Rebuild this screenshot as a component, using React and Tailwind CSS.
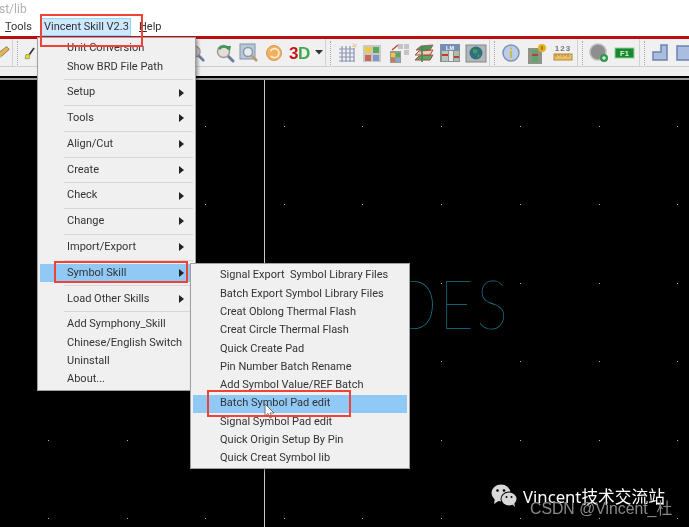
import React from 'react';

const mainMenu = [
  { label: 'Unit Conversion' },
  { label: 'Show BRD File Path' },
  { sep: true },
  { label: 'Setup', arrow: true },
  { sep: true },
  { label: 'Tools', arrow: true },
  { sep: true },
  { label: 'Align/Cut', arrow: true },
  { sep: true },
  { label: 'Create', arrow: true },
  { sep: true },
  { label: 'Check', arrow: true },
  { sep: true },
  { label: 'Change', arrow: true },
  { sep: true },
  { label: 'Import/Export', arrow: true },
  { sep: true },
  { label: 'Symbol Skill', arrow: true, active: true },
  { sep: true },
  { label: 'Load Other Skills', arrow: true },
  { sep: true },
  { label: 'Add Symphony_Skill' },
  { label: 'Chinese/English Switch' },
  { label: 'Uninstall' },
  { label: 'About...' },
];

const subMenu = [
  'Signal Export\u00a0 Symbol Library Files',
  'Batch Export Symbol Library Files',
  'Creat Oblong Thermal Flash',
  'Creat Circle Thermal Flash',
  'Quick Create Pad',
  'Pin Number Batch Rename',
  'Add Symbol Value/REF Batch',
  'Batch Symbol Pad edit',
  'Signal Symbol Pad edit',
  'Quick Origin Setup By Pin',
  'Quick Creat Symbol lib',
];

const Svg = ({ children, w = 22 }) => (
  <svg width={w} height="22" viewBox={`0 0 ${w} 22`} className="block">{children}</svg>
);

const Lens = ({ color = '#c9d6e2' }) => (
  <>
    <line x1="13" y1="13" x2="19" y2="19" stroke="#6b7f9e" strokeWidth="3" strokeLinecap="round" />
    <circle cx="9.5" cy="9.5" r="6" fill={color} stroke="#9a9a9a" strokeWidth="1.5" />
  </>
);

const icons = {
  pencil: (
    <Svg>
      <path d="M4 17 L7 11 L16 4 L19 7 L10 15 Z" fill="#e3b35a" stroke="#8a7448" strokeWidth="1" />
      <path d="M4 17 L7 11 L10 15 Z" fill="#d8d8d8" />
    </Svg>
  ),
  brush: (
    <Svg>
      <path d="M10 13 L16 5" stroke="#333" strokeWidth="2" />
      <path d="M6 13 L11 13 L10 18 L5 18 Z" fill="#e8d94a" stroke="#9a9340" strokeWidth="1" />
    </Svg>
  ),
  zoomIn: <Svg><Lens color="#d3c9c9" /></Svg>,
  zoomBack: (
    <Svg>
      <Lens color="#e8dcd6" />
      <path d="M5 7 Q10 2 15 7" fill="none" stroke="#3c9a55" strokeWidth="2.5" />
      <path d="M12 4 L17 4 L16 9 Z" fill="#3c9a55" />
    </Svg>
  ),
  zoomFit: (
    <Svg>
      <rect x="2" y="2" width="15" height="15" fill="#b9c8d8" stroke="#8294a8" />
      <circle cx="10" cy="10" r="4.5" fill="#e5edf3" stroke="#8a96a3" strokeWidth="1.5" />
      <line x1="14" y1="14" x2="19" y2="19" stroke="#b79a6a" strokeWidth="2.5" />
    </Svg>
  ),
  refresh: (
    <Svg>
      <circle cx="11" cy="11" r="7.5" fill="#f0b060" stroke="#d99a50" />
      <path d="M7.5 9 A4.5 4.5 0 1 1 8 14" fill="none" stroke="#fff0d8" strokeWidth="1.6" />
    </Svg>
  ),
  threeD: (
    <Svg>
      <text x="0" y="17" fontSize="17" fontWeight="700" fill="#c8141c" fontFamily="'Liberation Sans', sans-serif">3</text>
      <text x="9" y="17" fontSize="17" fontWeight="700" fill="#44a84f" fontFamily="'Liberation Sans', sans-serif">D</text>
    </Svg>
  ),
  drop: (
    <svg width="8" height="5" viewBox="0 0 8 5" className="block"><path d="M0 0 H8 L4 4.5 Z" fill="#333" /></svg>
  ),
  grid: (
    <Svg>
      <path d="M3 7 H18 M3 11 H18 M3 15 H18 M3 19 H18 M6 4 V20 M10 4 V20 M14 4 V20 M18 6 V20" stroke="#8d93b5" strokeWidth="1.2" />
      <path d="M17 1 L19 4 L21 2 M16 4 L20 5" stroke="#e8c080" strokeWidth="1" fill="none" />
    </Svg>
  ),
  colors: (
    <Svg>
      <rect x="2" y="3" width="18" height="17" fill="#c8c8c8" />
      <rect x="4" y="5" width="6" height="6" fill="#eec93c" />
      <rect x="12" y="5" width="6" height="6" fill="#58a85c" />
      <rect x="4" y="13" width="6" height="6" fill="#c56a5a" />
      <rect x="12" y="13" width="6" height="6" fill="#7f96c8" />
    </Svg>
  ),
  layers: (
    <Svg>
      <rect x="11" y="2" width="5" height="5" fill="#c4c4c4" />
      <rect x="17" y="2" width="5" height="5" fill="#c4c4c4" />
      <rect x="17" y="8" width="5" height="5" fill="#c4c4c4" />
      <rect x="3" y="9" width="11" height="12" fill="#9a9a8e" />
      <rect x="4" y="11" width="4" height="4" fill="#eec93c" />
      <rect x="9" y="11" width="4" height="4" fill="#58a85c" />
      <rect x="4" y="16" width="4" height="4" fill="#c87a6a" />
      <rect x="9" y="16" width="4" height="4" fill="#8fa6d0" />
      <path d="M5 8 L11 3" stroke="#c23a3a" strokeWidth="1.2" />
    </Svg>
  ),
  stack: (
    <Svg>
      <path d="M3 8 L8 4 L20 3 L17 8 Z" fill="#3f9a55" stroke="#a85a5a" />
      <path d="M2 13 L6 9 L20 8 L17 13 Z" fill="#e4d0b0" stroke="#a84a4a" />
      <path d="M2 18 L6 14 L20 13 L17 18 Z" fill="#5aa865" stroke="#a84a4a" />
      <path d="M9 4 V20" stroke="#3f8a4f" strokeWidth="1.6" />
    </Svg>
  ),
  lm: (
    <Svg>
      <rect x="1" y="2" width="20" height="18" fill="#8a8f94" />
      <rect x="2" y="3" width="18" height="5" fill="#6f8fc0" />
      <text x="11" y="7.6" textAnchor="middle" fontSize="5.5" fontWeight="700" fill="#fff" fontFamily="'Liberation Sans', sans-serif">LM</text>
      <rect x="3" y="9" width="6" height="10" fill="#b8c8b8" />
      <rect x="10" y="9" width="4" height="10" fill="#e8e8e8" />
      <rect x="15" y="9" width="5" height="10" fill="#a8c0a8" />
      <rect x="3" y="12" width="6" height="2" fill="#c23a3a" />
      <rect x="15" y="14" width="5" height="2" fill="#c23a3a" />
    </Svg>
  ),
  globe: (
    <Svg>
      <rect x="1" y="3" width="20" height="17" fill="#b2b6b8" stroke="#85888a" />
      <circle cx="11" cy="11" r="6.5" fill="#2f6f7f" />
      <path d="M8 7 L13 8 L11 12 L8 11 Z M13 12 L15 14 L12 16 Z" fill="#4a9a5a" />
    </Svg>
  ),
  info: (
    <Svg>
      <circle cx="11" cy="11" r="8" fill="#b9cce8" stroke="#7f92b4" strokeWidth="1.5" />
      <rect x="10" y="9" width="2" height="7" fill="#d0b840" />
      <rect x="10" y="5.5" width="2" height="2" fill="#d0b840" />
    </Svg>
  ),
  status: (
    <Svg>
      <rect x="2" y="6" width="14" height="16" fill="#8f9488" />
      <rect x="6" y="8" width="6" height="12" fill="#5fa468" />
      <rect x="6" y="12" width="6" height="2" fill="#c23a3a" />
      <circle cx="16" cy="6" r="4" fill="#e8b020" />
      <rect x="15.5" y="4" width="1" height="4" fill="#6a5010" />
    </Svg>
  ),
  ruler: (
    <Svg w={24}>
      <text x="12" y="9" textAnchor="middle" fontSize="8" fontWeight="700" letterSpacing="1" fill="#777" fontFamily="'Liberation Sans', sans-serif">123</text>
      <rect x="3" y="12" width="18" height="6" fill="#eebf60" stroke="#b08a40" />
      <path d="M5 12 V15 M8 12 V14 M11 12 V15 M14 12 V14 M17 12 V15" stroke="#a07830" strokeWidth="0.8" />
    </Svg>
  ),
  knob: (
    <Svg>
      <circle cx="10" cy="10" r="8" fill="#8e8e8e" stroke="#bdbdbd" strokeWidth="1.5" />
      <circle cx="16" cy="16" r="4" fill="#2f9a4f" />
      <path d="M14 16 H18 M16 14 V18" stroke="#fff" strokeWidth="1" />
    </Svg>
  ),
  f1: (
    <Svg w={24}>
      <rect x="2" y="6" width="19" height="10" fill="#178a2e" stroke="#9ccaa4" />
      <text x="11.5" y="13.8" textAnchor="middle" fontSize="7.5" fontWeight="700" fill="#d8f0d8" fontFamily="'Liberation Sans', sans-serif">F1</text>
    </Svg>
  ),
  step: (
    <Svg>
      <path d="M12 3 H18 V18 H4 V10 H12 Z" fill="#a8bde0" stroke="#6d84ad" strokeWidth="1.5" />
    </Svg>
  ),
  box: (
    <Svg>
      <rect x="3" y="4" width="19" height="14" fill="#a8bde0" stroke="#6d84ad" strokeWidth="1.5" />
    </Svg>
  ),
};

// width of each toolbar cell, the row has to land on the icon columns of the picture
const toolbar = [
  { w: 'w-[20px] -ml-2', icon: 'pencil' },
  { sep: true },
  { handle: true },
  { w: 'w-[18px]', icon: 'brush' },
  { w: 'w-[147px]' },
  { w: 'w-[20px]', icon: 'zoomIn' },
  { w: 'w-[7px]' },
  { w: 'w-[24px]', icon: 'zoomBack' },
  { w: 'w-[24px]', icon: 'zoomFit' },
  { w: 'w-[26px]', icon: 'refresh' },
  { w: 'w-[26px]', icon: 'threeD' },
  { w: 'w-[12px]', icon: 'drop' },
  { sep: true },
  { handle: true },
  { w: 'w-[25px]', icon: 'grid' },
  { w: 'w-[26px]', icon: 'colors' },
  { w: 'w-[26px]', icon: 'layers' },
  { w: 'w-[26px]', icon: 'stack' },
  { w: 'w-[26px]', icon: 'lm' },
  { w: 'w-[26px]', icon: 'globe' },
  { sep: true },
  { handle: true },
  { w: 'w-[26px]', icon: 'info' },
  { w: 'w-[25px]', icon: 'status' },
  { w: 'w-[28px]', icon: 'ruler' },
  { sep: true },
  { handle: true },
  { w: 'w-[25px]', icon: 'knob' },
  { w: 'w-[28px]', icon: 'f1' },
  { sep: true },
  { handle: true },
  { w: 'w-[24px]', icon: 'step' },
  { w: 'w-[25px]', icon: 'box' },
];

const dotXs = [48, 127, 205, 284, 362, 441, 520, 599, 677];
const dotYs = [126, 204, 283, 361, 440, 518];

const Arrow = () => (
  <svg width="5" height="8" viewBox="0 0 5 8" className="block"><path d="M0 0 L5 4 L0 8 Z" fill="#222" /></svg>
);

const WeChat = () => (
  <svg width="27" height="24" viewBox="0 0 27 24" className="block">
    <ellipse cx="10" cy="9" rx="9.5" ry="8.5" fill="#d8d8d8" />
    <path d="M4 14 L3 20 L9 16 Z" fill="#d8d8d8" />
    <ellipse cx="18" cy="15" rx="8.5" ry="7.5" fill="#000" />
    <ellipse cx="18" cy="15" rx="7.5" ry="6.5" fill="#d8d8d8" />
    <path d="M21 20 L24 23 L23 18 Z" fill="#d8d8d8" />
    <circle cx="6.5" cy="6.5" r="1.3" fill="#000" />
    <circle cx="13" cy="6.5" r="1.3" fill="#000" />
    <circle cx="15.5" cy="13" r="1" fill="#000" />
    <circle cx="20.5" cy="13" r="1" fill="#000" />
  </svg>
);

export default function App() {
  return (
    <div className="relative w-[689px] h-[527px] overflow-hidden flex flex-col bg-black font-['Roboto',sans-serif] text-[11px] text-[#333] [filter:blur(0.45px)]">
      {/* title */}
      <div className="h-[18px] bg-white text-[#b0b0b0] text-[12px] leading-[18px] -ml-[1px]">st/lib</div>

      {/* menu bar */}
      <div className="h-[18px] bg-white flex items-center text-[#333]">
        <span className="ml-[5px] w-[35px]"><span className="underline">T</span>ools</span>
        <span className="w-[91px] h-full bg-[#cde8ff] border border-[#99d1ff] pl-[3px] leading-[16px] whitespace-nowrap">Vincent Skill V2.3</span>
        <span className="ml-[8px]"><span className="underline">H</span>elp</span>
      </div>
      <div className="h-[3px] bg-[#b90f14]" />

      {/* toolbar */}
      <div className="h-[28px] flex items-center bg-[#f0f0f0] border-b border-[#cfcfcf] overflow-hidden shrink-0">
        {toolbar.map((it, i) => {
          if (it.sep) return <div key={i} className="w-px h-full bg-[#d2d2d2] shrink-0" />;
          if (it.handle) {
            return (
              <div key={i} className="w-[8px] h-[24px] shrink-0 flex justify-center">
                <div className="w-px h-full border-l border-dotted border-[#a8a8a8]" />
              </div>
            );
          }
          return (
            <div key={i} className={`${it.w} h-full shrink-0 flex items-center justify-center`}>
              {it.icon && icons[it.icon]}
            </div>
          );
        })}
      </div>
      <div className="h-[9px] bg-[#f0f0f0] shrink-0" />
      <div className="h-[2px] bg-black shrink-0" />
      <div className="h-[2px] bg-[#9a9a9a] shrink-0" />

      {/* canvas */}
      <div className="relative flex-1">
        <svg width="689" height="447" viewBox="0 80 689 447" className="absolute inset-0">
          <line x1="264.5" y1="80" x2="264.5" y2="527" stroke="#c8c8c8" />
          {dotYs.map((y) => dotXs.map((x) => (
            <rect key={`${x}-${y}`} x={x} y={y} width="1" height="1" fill="#b0b0b0" />
          )))}
        </svg>
        <div className="absolute left-[392px] top-[189px] origin-left scale-x-[0.87] font-['Lato',sans-serif] font-thin text-[#1d7a8e] text-[68px] leading-[68px] tracking-[3px]">DES</div>
        <div className="absolute left-[491px] top-[404px]"><WeChat /></div>
        <div className="absolute left-[523px] top-[405px] text-white text-[16.7px] leading-[24px] whitespace-nowrap font-['Noto_Sans','Noto_Sans_CJK_SC',sans-serif]">Vincent技术交流站</div>
        <div className="absolute left-[530px] top-[418px] text-[#8a8a8a] text-[15.8px] leading-[22px] whitespace-nowrap font-['Liberation_Sans','Noto_Sans_CJK_SC',sans-serif]">CSDN @Vincent_杜</div>
      </div>

      {/* main menu */}
      <div className="absolute left-[37px] top-[37px] w-[159px] h-[354px] bg-[#f0f0f0] border border-[#a0a0a0] pt-[1.5px] pl-[2px] pr-[2px] shadow-[2px_2px_3px_rgba(0,0,0,0.35)]">
        {mainMenu.map((it, i) =>
          it.sep ? (
            <div key={i} className="h-[7.6px] flex items-center pl-[24px]">
              <div className="h-px w-full bg-[#d7d7d7]" />
            </div>
          ) : (
            <div key={i} className={`h-[18.2px] flex items-center justify-between pl-[27px] pr-[9px] ${it.active ? 'bg-[#90c8f6]' : ''}`}>
              <span className="whitespace-nowrap">{it.label}</span>
              {it.arrow && <Arrow />}
            </div>
          )
        )}
      </div>

      {/* sub menu */}
      <div className="absolute left-[190px] top-[263px] w-[220px] h-[206px] bg-[#f0f0f0] border border-[#a0a0a0] pt-[2.5px] pl-[2px] pr-[2px] shadow-[2px_2px_3px_rgba(0,0,0,0.35)]">
        {subMenu.map((label, i) => (
          <div key={i} className={`h-[18.3px] flex items-center pl-[27px] whitespace-pre ${i === 7 ? 'bg-[#90c8f6]' : ''}`}>{label}</div>
        ))}
      </div>

      {/* mouse pointer */}
      <svg width="11" height="15" viewBox="0 0 11 15" className="absolute left-[264px] top-[404px]">
        <path d="M1 0 L1 12 L4 9.5 L6 14 L8 13 L6 9 L10 9 Z" fill="#fff" stroke="#555" strokeWidth="0.8" />
      </svg>

      {/* red annotation boxes */}
      <div className="absolute left-[40px] top-[14px] w-[103px] h-[33px] border-2 border-[#ee4336]" />
      <div className="absolute left-[54px] top-[261px] w-[134px] h-[22px] border-2 border-[#ee4336]" />
      <div className="absolute left-[207px] top-[390px] w-[144px] h-[27px] border-2 border-[#ee4336]" />
    </div>
  );
}
